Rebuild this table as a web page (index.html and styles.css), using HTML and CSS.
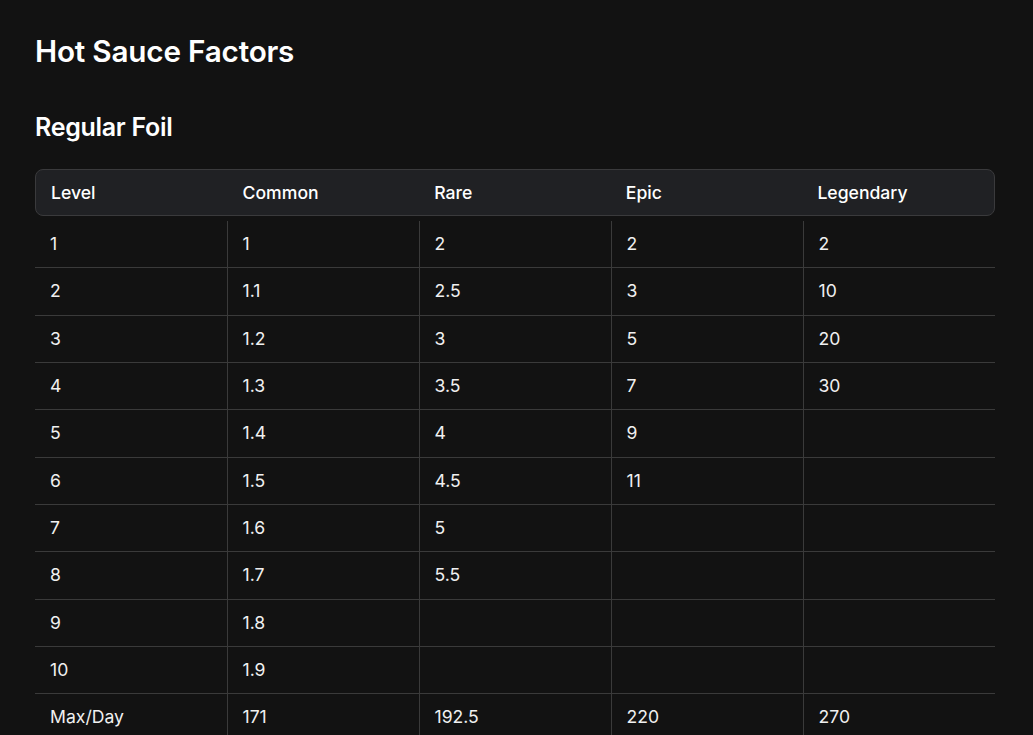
FILE: index.html
```html
<!DOCTYPE html>
<html lang="en">
<head>
<meta charset="utf-8">
<title>Hot Sauce Factors</title>
<link rel="stylesheet" href="styles.css">
</head>
<body>
<main class="page">
  <h1 class="title">Hot Sauce Factors</h1>
  <h2 class="subtitle">Regular Foil</h2>
  <table class="grid head">
    <thead>
      <tr><th>Level</th><th>Common</th><th>Rare</th><th>Epic</th><th>Legendary</th></tr>
    </thead>
  </table>
  <table class="grid body">
    <tbody>
      <tr><td>1</td><td>1</td><td>2</td><td>2</td><td>2</td></tr>
      <tr><td>2</td><td>1.1</td><td>2.5</td><td>3</td><td>10</td></tr>
      <tr><td>3</td><td>1.2</td><td>3</td><td>5</td><td>20</td></tr>
      <tr><td>4</td><td>1.3</td><td>3.5</td><td>7</td><td>30</td></tr>
      <tr><td>5</td><td>1.4</td><td>4</td><td>9</td><td></td></tr>
      <tr><td>6</td><td>1.5</td><td>4.5</td><td>11</td><td></td></tr>
      <tr><td>7</td><td>1.6</td><td>5</td><td></td><td></td></tr>
      <tr><td>8</td><td>1.7</td><td>5.5</td><td></td><td></td></tr>
      <tr><td>9</td><td>1.8</td><td></td><td></td><td></td></tr>
      <tr><td>10</td><td>1.9</td><td></td><td></td><td></td></tr>
      <tr><td>Max/Day</td><td>171</td><td>192.5</td><td>220</td><td>270</td></tr>
    </tbody>
  </table>
</main>
</body>
</html>
```
FILE: styles.css
```css
html, body {
  margin: 0;
  padding: 0;
  background: #121212;
  color: #f0f0f0;
  font-family: Inter, "Noto Sans", sans-serif;
}
.page {
  padding: 32px 38px 0 35px;
  width: 960px;
}
.title {
  margin: 0;
  font-size: 29.7px;
  font-weight: 600;
  line-height: 39px;
  color: #ffffff;
  letter-spacing: -0.2px;
}
.subtitle {
  margin: 40px 0 0 0;
  font-size: 25px;
  font-weight: 600;
  line-height: 32px;
  color: #ffffff;
  letter-spacing: -0.3px;
}
.grid {
  width: 960px;
  table-layout: fixed;
  border-spacing: 0;
  font-size: 17.6px;
  line-height: 24px;
}
.head {
  margin-top: 26px;
  background: #202124;
  border: 1px solid #3a3a3c;
  border-radius: 8px;
  border-collapse: separate;
}
.head th {
  height: 45px;
  box-sizing: border-box;
  text-align: left;
  font-weight: 500;
  color: #ffffff;
  padding: 1px 15px 0 15px;
}
.body {
  margin-top: 5px;
  border-collapse: collapse;
}
.body td {
  padding: 11.17px 15px;
  border-bottom: 1px solid #3a3a3a;
  border-left: 1px solid #3a3a3a;
  color: #f0f0f0;
}
.body td:first-child {
  border-left: none;
  padding-left: 15px;
}
.body tr:last-child td {
  border-bottom: none;
}
```
